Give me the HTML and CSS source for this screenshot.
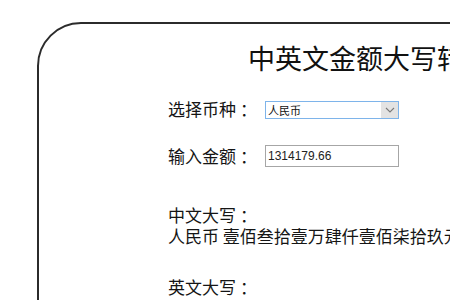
FILE: index.html
```html
<!DOCTYPE html>
<html lang="zh-CN">
<head>
<meta charset="utf-8">
<title>中英文金额大写转换</title>
<link rel="stylesheet" href="styles.css">
</head>
<body>
<div class="card">
  <h1 class="title">中英文金额大写转换器</h1>
  <div class="form">
    <div class="row row-currency">
      <span class="label">选择币种<span class="colon">：</span></span>
      <div class="select-wrap">
        <select class="select">
          <option>人民币</option>
          <option>美元</option>
        </select>
        <span class="select-arrow">
          <svg width="10" height="6" viewBox="0 0 10 6"><path d="M1 1 L5 5 L9 1" fill="none" stroke="#7a7a7a" stroke-width="1.1"/></svg>
        </span>
      </div>
    </div>
    <div class="row row-amount">
      <span class="label">输入金额<span class="colon">：</span></span>
      <input class="input" type="text" value="1314179.66">
    </div>
    <div class="result result-cn">
      <div class="result-label">中文大写<span class="colon">：</span></div>
      <div class="result-text">人民币 壹佰叁拾壹万肆仟壹佰柒拾玖元陆角陆分</div>
    </div>
    <div class="result result-en">
      <div class="result-label">英文大写<span class="colon">：</span></div>
    </div>
  </div>
</div>
</body>
</html>
```
FILE: styles.css
```css
html, body {
  margin: 0;
  background: #fff;
}
body {
  width: 450px;
  height: 300px;
  overflow: hidden;
  padding: 22px 0 0 37px;
  box-sizing: border-box;
  font-family: "Noto Sans CJK SC", "Liberation Sans", sans-serif;
  color: #151515;
}
.card {
  width: 700px;
  height: 420px;
  border: 2px solid #2b2b2b;
  border-radius: 44px;
  padding-top: 20px;
  box-sizing: border-box;
}
.title {
  margin: 0 0 0 209px;
  font-size: 27px;
  line-height: 1;
  font-weight: 400;
  white-space: nowrap;
  color: #111;
}
.colon {
  font-family: "Noto Sans CJK JP", sans-serif;
  margin-left: 4px;
}
.form {
  padding-left: 129px;
}
.row {
  display: flex;
  align-items: flex-start;
}
.row-currency {
  margin-top: 27px;
}
.row-amount {
  margin-top: 26px;
}
.label {
  flex: none;
  width: 97px;
  padding-top: 2px;
  font-size: 17px;
  line-height: 17px;
  white-space: nowrap;
}
.select-wrap {
  position: relative;
  margin-top: 3px;
  width: 134px;
  height: 18px;
}
.select {
  appearance: none;
  -webkit-appearance: none;
  display: block;
  width: 100%;
  height: 18px;
  margin: 0;
  padding: 0 0 0 2px;
  border: 1px solid #7eb4ea;
  border-radius: 0;
  background: #fff;
  font-family: "Noto Sans CJK SC", sans-serif;
  font-size: 11px;
  line-height: 16px;
  color: #111;
  box-sizing: border-box;
}
.select-arrow {
  position: absolute;
  top: 1px;
  right: 1px;
  width: 17px;
  height: 16px;
  background: #e3e3e3;
  display: flex;
  align-items: center;
  justify-content: center;
  pointer-events: none;
}
.input {
  display: block;
  width: 134px;
  height: 22px;
  margin: 0;
  padding: 0 0 0 2px;
  border: 1px solid #a6a6a6;
  border-radius: 0;
  box-sizing: border-box;
  font-family: "Liberation Sans", Arial, sans-serif;
  font-size: 12px;
  color: #222;
  background: #fff;
}
.result {
  font-size: 17px;
  line-height: 21px;
  white-space: nowrap;
}
.result-cn {
  margin-top: 37px;
}
.result-en {
  margin-top: 30px;
}
```
